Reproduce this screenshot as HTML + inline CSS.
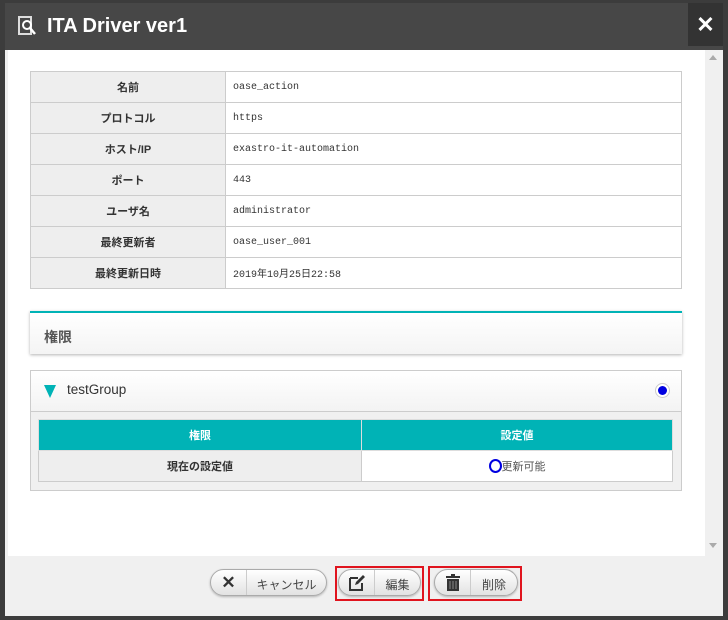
<!DOCTYPE html>
<html><head><meta charset="utf-8"><style>
*{box-sizing:border-box;margin:0;padding:0}
body{width:728px;height:620px;background:#3c3c3c;position:relative;overflow:hidden;font-family:"Liberation Sans","Noto Sans CJK JP",sans-serif}
.dlg{position:absolute;left:5px;top:3px;width:718px;height:613px;background:#f0f0f0}
.hdr{position:absolute;left:0;top:0;width:718px;height:47px;background:#474747;color:#fff;font-weight:bold;font-size:20px}
.hdr .t{position:absolute;left:42px;top:12px}
.close{position:absolute;right:0;top:0;width:35px;height:43px;background:#333;color:#fff;font-size:22px;text-align:center;line-height:44px;font-weight:bold}
.body{position:absolute;left:3px;top:47px;width:697px;height:506px;background:#fff}
.sb{position:absolute;left:700px;top:47px;width:15px;height:506px;background:#f0f0f0}
table{border-collapse:collapse}
.info{position:absolute;left:22px;top:21px;width:652px}
.info td{border:1px solid #ccc;height:31px;font-size:11px;color:#333}
.info td.l{width:195px;background:#eee;text-align:center;font-weight:bold}
.info td.v{padding-left:7px;font-family:"Liberation Mono","Noto Sans CJK JP",monospace;font-size:10px}
.pan{position:absolute;left:22px;top:261px;width:652px;height:43px;border-top:2px solid #00b3b6;background:linear-gradient(#fff,#f4f4f4);box-shadow:0 1px 3px rgba(0,0,0,.3);font-size:14px;color:#555;font-weight:bold;padding:14px 0 0 14px}
.grp{position:absolute;left:22px;top:320px;width:652px;height:121px;border:1px solid #ccc;background:#f0f0f0}
.gh{height:41px;background:linear-gradient(#fff,#f3f3f3);border-bottom:1px solid #ccc;position:relative;font-size:13.5px;color:#333}
.gh .tri{position:absolute;left:13px;top:14px;width:0;height:0;border-left:6px solid transparent;border-right:6px solid transparent;border-top:13px solid #00b3b6}
.gh .n{position:absolute;left:36px;top:11px}
.gh .dot{position:absolute;right:11px;top:12px;width:15px;height:15px;border-radius:50%;background:#fff;border:1px solid #ccc}
.gh .dot:after{content:"";position:absolute;left:2px;top:2px;width:9px;height:9px;border-radius:50%;background:#0000e0}
.pt{position:absolute;left:7px;top:48px;width:635px}
.pt td{border:1px solid #ccc;text-align:center;font-size:11px;color:#333}
.pt th{background:#00b3b6;color:#fff;font-size:11px;height:31px;border:1px solid #ddd}
.pt td{height:31px}
.btn{position:absolute;top:569px;height:27px;border:1px solid #aaa;border-radius:14px;background:linear-gradient(#fff,#e2e2e2);box-shadow:0 1px 2px rgba(0,0,0,.25);font-size:12px;color:#444}
.btn .ic{position:absolute;left:0;top:0;width:36px;height:25px;border-right:1px solid #ccc;text-align:center;line-height:25px;font-weight:bold;font-size:17px;color:#333}
.btn .tx{position:absolute;left:36px;right:0;top:6px;text-align:center}
.red{position:absolute;border:2px solid #e0141e}
</style></head><body>
<div class="dlg">
<div class="hdr"><svg style="position:absolute;left:13px;top:13px" width="18" height="20" viewBox="0 0 18 20"><rect x="1" y="1" width="12" height="17" fill="none" stroke="#ddd" stroke-width="2"/><circle cx="9" cy="9" r="4" fill="none" stroke="#fff" stroke-width="2"/><line x1="12" y1="12" x2="17" y2="18" stroke="#fff" stroke-width="2.5"/></svg><span class="t">ITA Driver ver1</span><div class="close">✕</div></div>
<div class="body">
<table class="info">
<tr><td class="l">名前</td><td class="v">oase_action</td></tr>
<tr><td class="l">プロトコル</td><td class="v">https</td></tr>
<tr><td class="l">ホスト/IP</td><td class="v">exastro-it-automation</td></tr>
<tr><td class="l">ポート</td><td class="v">443</td></tr>
<tr><td class="l">ユーザ名</td><td class="v">administrator</td></tr>
<tr><td class="l">最終更新者</td><td class="v">oase_user_001</td></tr>
<tr><td class="l">最終更新日時</td><td class="v">2019年10月25日22:58</td></tr>
</table>
<div class="pan">権限</div>
<div class="grp"><div class="gh"><span class="tri"></span><span class="n">testGroup</span><span class="dot"></span></div>
<table class="pt"><tr><th style="width:323px">権限</th><th>設定値</th></tr>
<tr><td style="background:#eee;font-weight:bold">現在の設定値</td><td style="background:#fff;color:#555"><span style="display:inline-block;width:13px;height:14px;border:2.5px solid #0000e0;border-radius:50%;vertical-align:-3px"></span>更新可能</td></tr></table>
</div>
</div>
<div class="sb"><div style="margin:5px 0 0 4px;width:0;border-left:4px solid transparent;border-right:4px solid transparent;border-bottom:5px solid #aaa"></div><div style="margin:483px 0 0 4px;width:0;border-left:4px solid transparent;border-right:4px solid transparent;border-top:5px solid #aaa"></div></div>
</div>
<div class="btn" style="left:210px;width:117px"><span class="ic">✕</span><span class="tx">キャンセル</span></div>
<div class="btn" style="left:338px;width:83px"><span class="ic"><svg width="16" height="16" viewBox="0 0 16 16" style="vertical-align:-3px"><path d="M1 3h8M1 3v12h12V8" fill="none" stroke="#333" stroke-width="2"/><path d="M6 10l1-3 7-7 2 2-7 7z" fill="#333"/></svg></span><span class="tx">編集</span></div>
<div class="btn" style="left:434px;width:84px"><span class="ic"><svg width="14" height="17" viewBox="0 0 14 17" style="vertical-align:-3px"><rect x="0" y="2" width="14" height="2" fill="#333"/><rect x="5" y="0" width="4" height="2" fill="#333"/><path d="M1 5h12v12H1z" fill="#333"/><path d="M4 7v8M7 7v8M10 7v8" stroke="#888" stroke-width="1"/></svg></span><span class="tx">削除</span></div>
<div class="red" style="left:335px;top:566px;width:89px;height:35px"></div>
<div class="red" style="left:428px;top:566px;width:94px;height:35px"></div>
</body></html>
